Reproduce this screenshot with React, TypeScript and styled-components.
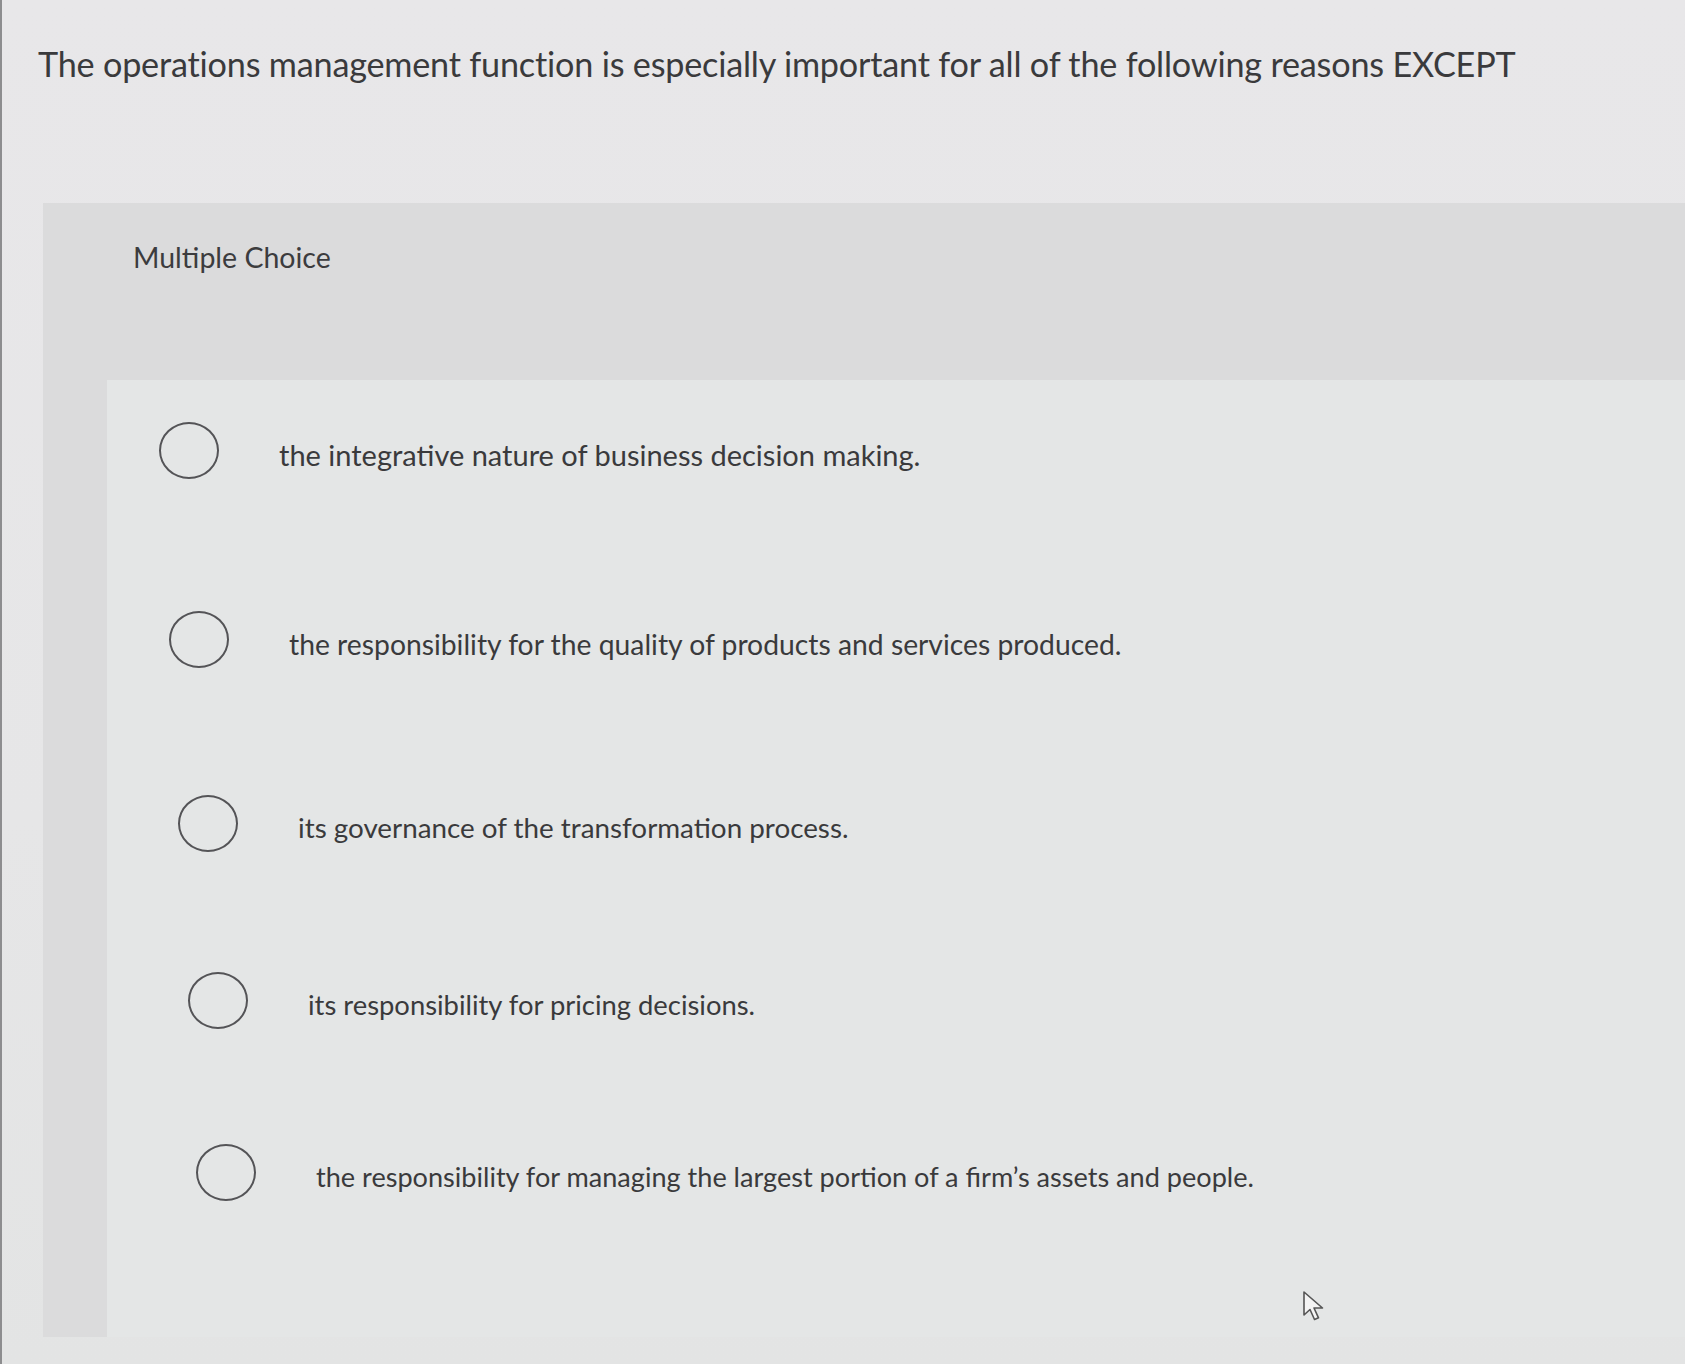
import React from "react";
import styled, { createGlobalStyle } from "styled-components";

const Global = createGlobalStyle`
  html, body { margin: 0; padding: 0; }
  body {
    background: #e6e6e8;
    font-family: Lato, "Open Sans", "Liberation Sans", sans-serif;
    color: #3b3b3d;
  }
`;

const Page = styled.div`
  position: relative;
  width: 1685px;
  height: 1364px;
  overflow: hidden;
  background: linear-gradient(180deg, #e8e7e9 0%, #e6e6e7 60%, #e3e4e4 100%);
  border-left: 2px solid #8d8d8f;
  box-sizing: border-box;
`;

const Title = styled.h1`
  margin: 0;
  padding: 43px 0 0 36px;
  font-size: 34.2px;
  font-weight: 400;
  letter-spacing: -0.2px;
  color: #3a3a3c;
  white-space: nowrap;
`;

const Panel = styled.section`
  margin: 119px 0 0 41px;
  height: 1134px;
  background: #dbdbdc;
  display: flex;
  flex-direction: column;
`;

const PanelHeader = styled.div`
  height: 177px;
  padding: 37px 0 0 90px;
  box-sizing: border-box;
  font-size: 28.5px;
  color: #3c3c3e;
`;

const Options = styled.div`
  flex: 1;
  margin-left: 64px;
  background: #e4e6e6;
  padding-top: 42px;
  display: flex;
  flex-direction: column;
`;

const Row = styled.label<{ $indent: number; $top: number }>`
  display: flex;
  align-items: center;
  gap: 60px;
  margin-top: ${(p) => p.$top}px;
  padding-left: ${(p) => p.$indent}px;
  cursor: pointer;
`;

const Radio = styled.span`
  width: 56px;
  height: 53px;
  border: 2px solid #545457;
  border-radius: 50%;
  flex: none;
`;

const OptionText = styled.span<{ $size: number }>`
  font-size: ${(p) => p.$size}px;
  color: #3a3a3c;
  padding-top: 8px;
  white-space: nowrap;
`;

const Cursor = styled.svg`
  position: absolute;
  left: 1300px;
  top: 1290px;
  width: 26px;
  height: 32px;
`;

const options = [
  { text: "the integrative nature of business decision making.", indent: 52, top: 0, size: 29 },
  { text: "the responsibility for the quality of products and services produced.", indent: 62, top: 132, size: 28.3 },
  { text: "its governance of the transformation process.", indent: 71, top: 127, size: 27.8 },
  { text: "its responsibility for pricing decisions.", indent: 81, top: 120, size: 27.4 },
  { text: "the responsibility for managing the largest portion of a firm\u2019s assets and people.", indent: 89, top: 115, size: 27.1 },
];

export default function App() {
  return (
    <Page>
      <Global />
      <Title>The operations management function is especially important for all of the following reasons EXCEPT</Title>
      <Panel>
        <PanelHeader>Multiple Choice</PanelHeader>
        <Options>
          {options.map((o) => (
            <Row key={o.text} $indent={o.indent} $top={o.top}>
              <Radio />
              <OptionText $size={o.size}>{o.text}</OptionText>
            </Row>
          ))}
        </Options>
      </Panel>
      <Cursor viewBox="0 0 26 32">
        <path
          d="M2 2 L2 25 L8 19.5 L12.5 29.5 L16.5 27.8 L12 18 L20.5 18 Z"
          fill="#f4f4f4"
          stroke="#555"
          strokeWidth="1.6"
          strokeLinejoin="round"
        />
      </Cursor>
    </Page>
  );
}
